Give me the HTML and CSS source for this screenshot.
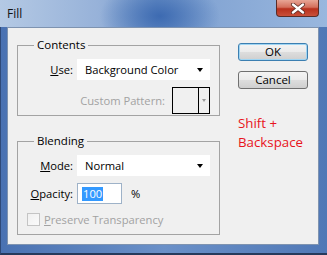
FILE: index.html
```html
<!DOCTYPE html>
<html>
<head>
<meta charset="utf-8">
<link rel="stylesheet" href="styles.css">
</head>
<body>
<div class="window">
  <div class="titlebar">
    <span class="title">Fill</span>
    <div class="close">
      <svg width="16" height="11" viewBox="0 0 16 11">
        <path d="M3 1.5 L13 9.5 M13 1.5 L3 9.5" stroke="#5a2a22" stroke-width="4" stroke-linecap="round"/>
        <path d="M3 1.5 L13 9.5 M13 1.5 L3 9.5" stroke="#ffffff" stroke-width="2.4" stroke-linecap="round"/>
      </svg>
    </div>
  </div>
  <div class="client">
    <div class="groups">
      <fieldset class="group">
        <legend>Contents</legend>
        <div class="grid">
          <span class="lbl"><u>U</u>se:</span>
          <div class="select"><span>Background Color</span><span class="arrow"></span></div>
          <div class="pattern-row">
            <span class="disabled">Custom Pattern:</span>
            <div class="swatch">
              <div class="swatch-main"></div>
              <div class="swatch-btn"><span class="arrow small"></span></div>
            </div>
          </div>
        </div>
      </fieldset>
      <fieldset class="group blending">
        <legend>Blending</legend>
        <div class="grid">
          <span class="lbl"><u>M</u>ode:</span>
          <div class="select"><span>Normal</span><span class="arrow"></span></div>
          <span class="lbl"><u>O</u>pacity:</span>
          <div class="opacity">
            <div class="input"><span class="sel">100</span></div>
            <span class="pct">%</span>
          </div>
          <div class="check-row">
            <span class="checkbox"></span>
            <span class="disabled"><u>P</u>reserve Transparency</span>
          </div>
        </div>
      </fieldset>
    </div>
    <div class="side">
      <button class="btn default">OK</button>
      <button class="btn">Cancel</button>
      <p class="note">Shift +<br>Backspace</p>
    </div>
  </div>
</div>
</body>
</html>
```
FILE: styles.css
```css
html, body {
  margin: 0;
  padding: 0;
  background: #2b3a52;
}
body {
  font-family: "Open Sans", "Noto Sans", sans-serif;
  font-size: 11px;
  color: #000;
}
.window {
  width: 327px;
  height: 255px;
  box-sizing: border-box;
  background: linear-gradient(90deg, #4a72b2 0%, #6a90c8 50%, #5078b6 100%);
  border-left: 1px solid #2f4a78;
  border-bottom: 2px solid #263a5c;
  display: flex;
  flex-direction: column;
}
.titlebar {
  height: 27px;
  flex: none;
  display: flex;
  justify-content: space-between;
  align-items: flex-start;
  background:
    radial-gradient(ellipse 60px 36px at 160px 16px, rgba(58,104,176,0.95), rgba(58,104,176,0) 100%),
    linear-gradient(90deg, #b4c9e4 0%, #97b2d9 30%, #7398cb 48%, #85a6d4 65%, #99b7de 100%);
  margin-left: -1px;
}
.title {
  margin: 6px 0 0 7px;
  font-family: "Open Sans", sans-serif;
  font-size: 12px;
  line-height: 16px;
  color: #111;
}
.close {
  width: 43px;
  height: 17px;
  margin-right: 8px;
  box-sizing: border-box;
  border: 1px solid #5b2c26;
  border-top: none;
  border-radius: 0 0 4px 4px;
  background: linear-gradient(180deg, #e8a595 0%, #d46f5c 45%, #b8301c 55%, #c9503a 100%);
  display: flex;
  align-items: center;
  justify-content: center;
}
.client {
  flex: none;
  margin-left: 6px;
  width: 312px;
  height: 218px;
  box-sizing: border-box;
  border: 1px solid #7e93b0;
  background: #f0f0f0;
  padding: 9px 0 0 9px;
  display: flex;
  gap: 18px;
}
.groups {
  width: 203px;
  display: flex;
  flex-direction: column;
  gap: 17px;
}
.group {
  margin: 0;
  padding: 6px 8px 1px 0;
  border: 1px solid #a3a3a3;
  box-sizing: border-box;
  width: 203px;
  min-width: 0;
}
.group legend {
  margin-left: 16px;
  padding: 0 3px;
  line-height: 16px;
  font-size: 11.5px;
}
.blending {
  padding-bottom: 7px;
}
.grid {
  display: grid;
  grid-template-columns: 55px 133px;
  column-gap: 4px;
  row-gap: 7px;
  align-items: center;
}
.lbl {
  text-align: right;
  font-size: 11.2px;
}
.select {
  height: 21px;
  background: #fff;
  display: flex;
  align-items: center;
  justify-content: space-between;
  padding: 0 7px 0 8px;
  font-size: 11.2px;
}
.arrow {
  width: 0;
  height: 0;
  border-left: 3.5px solid transparent;
  border-right: 3.5px solid transparent;
  border-top: 4px solid #000;
}
.arrow.small {
  border-left-width: 2.5px;
  border-right-width: 2.5px;
  border-top: 3px solid #9a9a9a;
}
.pattern-row {
  grid-column: 1 / 3;
  justify-self: end;
  display: flex;
  align-items: center;
  gap: 7px;
  margin-right: 0;
}
.disabled {
  color: #a2a2a2;
  font-size: 11.2px;
}
.swatch {
  width: 38px;
  height: 27px;
  box-sizing: border-box;
  border: 1px solid #000;
  display: flex;
}
.swatch-main {
  flex: 1;
  border-right: 1px solid #000;
}
.swatch-btn {
  width: 10px;
  display: flex;
  align-items: center;
  justify-content: center;
}
.opacity {
  display: flex;
  align-items: center;
}
.input {
  width: 45px;
  height: 21px;
  box-sizing: border-box;
  border: 1px solid #9eb2c8;
  background: #fff;
  display: flex;
  align-items: center;
  padding-left: 4px;
}
.sel {
  background: #3399ff;
  color: #fff;
  font-size: 11.2px;
  line-height: 14px;
  padding: 0 1px;
}
.pct {
  margin-left: 9px;
  font-size: 11.2px;
}
.check-row {
  grid-column: 1 / 3;
  display: flex;
  align-items: center;
  gap: 4px;
  margin-left: 9px;
  margin-top: 1px;
}
.checkbox {
  width: 13px;
  height: 13px;
  box-sizing: border-box;
  border: 1px solid #c4c4c4;
  background: linear-gradient(135deg, #f0f0f0, #fafafa);
}
.side {
  width: 70px;
  display: flex;
  flex-direction: column;
}
.btn {
  width: 70px;
  height: 18px;
  margin: 0;
  padding: 0;
  box-sizing: border-box;
  border: 1px solid #707070;
  border-radius: 3px;
  background: linear-gradient(180deg, #f4f4f4 0%, #ebebeb 48%, #dddddd 52%, #cfcfcf 100%);
  font-family: "Open Sans", sans-serif;
  font-size: 11.5px;
  line-height: 16px;
  color: #000;
}
.btn.default {
  margin-top: 6px;
  border-color: #3c7fb1;
  box-shadow: inset 0 0 0 1px #9fd5f3;
}
.btn + .btn {
  margin-top: 10px;
}
.note {
  margin: 25px 0 0 0;
  color: #e8141c;
  font-size: 13.3px;
  line-height: 19px;
}
```
